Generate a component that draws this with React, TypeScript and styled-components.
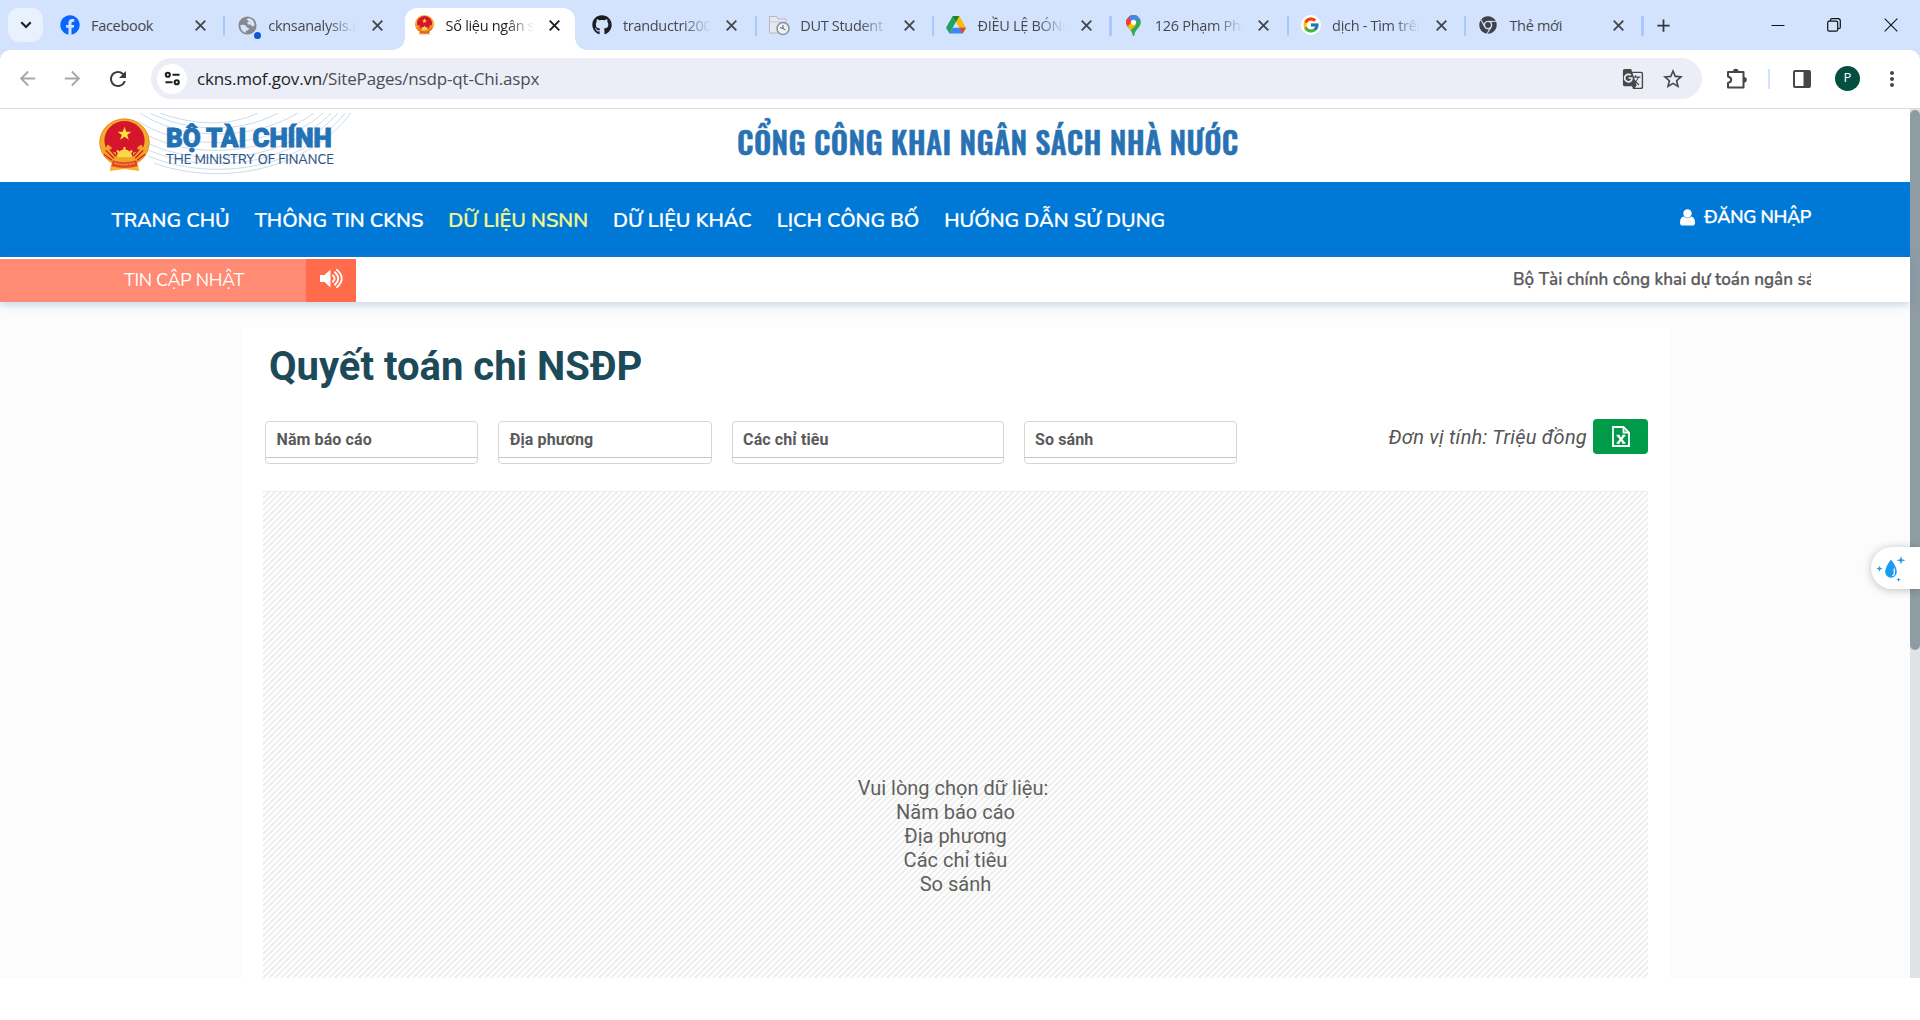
import React from "react";
import styled, { createGlobalStyle, css } from "styled-components";
import { FaFacebook, FaGithub, FaChrome } from "react-icons/fa";
import { FcGoogle } from "react-icons/fc";
import {
  MdGTranslate,
  MdStarBorder,
  MdAdd,
  MdArrowBack,
  MdArrowForward,
  MdRefresh,
  MdMoreVert,
} from "react-icons/md";

const UI_FONT = `"Open Sans", "Noto Sans", sans-serif`;
const SITE_FONT = `Nunito, Lato, "Noto Sans", sans-serif`;
const BODY_FONT = `Roboto, "Noto Sans", sans-serif`;
const TITLE_FONT = `Oswald, "Roboto Condensed", Roboto, sans-serif`;

const GlobalStyle = createGlobalStyle`
  *, *::before, *::after { box-sizing: border-box; }
  body { margin: 0; background: #fff; overflow: hidden; }
  svg { display: block; flex: none; }
`;

const Screen = styled.div`
  position: relative;
  width: 1920px;
  height: 1020px;
  overflow: hidden;
  display: flex;
  flex-direction: column;
  background: #fff;
`;

/* ---------- browser chrome ---------- */

const TabStrip = styled.div`
  height: 50px;
  flex: none;
  display: flex;
  padding-left: 8px;
  background: #d3e2fd;
`;

const TabSearch = styled.div`
  width: 35px;
  height: 34px;
  margin: 8px 4px 0 0;
  border-radius: 11px;
  background: #e9f0fe;
  display: flex;
  align-items: center;
  justify-content: center;
  color: #1f1f1f;
`;

const TabBox = styled.div<{ $active?: boolean; $line?: boolean }>`
  position: relative;
  isolation: isolate;
  width: 177.3px;
  height: 50px;
  padding-left: 13px;
  display: flex;
  align-items: center;
  color: ${(p) => (p.$active ? "#1f1f1f" : "#45494d")};
  ${(p) =>
    p.$line &&
    css`
      &::after {
        content: "";
        position: absolute;
        right: -1px;
        top: 16px;
        width: 2.5px;
        height: 20px;
        background: #a9c8fb;
      }
    `}
`;

const ActiveShape = styled.div`
  position: absolute;
  z-index: -1;
  left: 3px;
  right: 4px;
  top: 8px;
  bottom: 0;
  border-radius: 12px 12px 0 0;
  background: #fff;
  &::before,
  &::after {
    content: "";
    position: absolute;
    bottom: 0;
    width: 12px;
    height: 12px;
  }
  &::before {
    left: -12px;
    background: radial-gradient(circle at 0 0, transparent 11.5px, #fff 12px);
  }
  &::after {
    right: -12px;
    background: radial-gradient(circle at 100% 0, transparent 11.5px, #fff 12px);
  }
`;

const TabIcon = styled.div`
  position: relative;
  width: 20px;
  height: 20px;
  margin-right: 11px;
  display: flex;
  align-items: center;
  justify-content: center;
`;

const NoticeDot = styled.i`
  position: absolute;
  right: -4px;
  bottom: -4px;
  width: 7px;
  height: 7px;
  border-radius: 50%;
  background: #0b57d0;
`;

const TabTitle = styled.div<{ $fade?: boolean }>`
  position: relative;
  width: 88px;
  margin: 1px 15.5px 0 0;
  overflow: hidden;
  white-space: nowrap;
  font: 14.5px/24px ${UI_FONT};
  letter-spacing: -0.3px;
  ${(p) =>
    p.$fade &&
    css`
      mask-image: linear-gradient(90deg, #000 68%, transparent 100%);
    `}
`;

const StripAfterTabs = styled.div`
  flex: 1;
  display: flex;
  align-items: center;
  color: #33373b;
  padding-left: 10px;
`;

const WindowControls = styled.div`
  margin-left: auto;
  display: grid;
  grid-template-columns: 56px 56px 58px;
  justify-items: center;
  align-items: center;
`;

const Toolbar = styled.div`
  height: 59px;
  flex: none;
  display: flex;
  align-items: center;
  padding: 0 16px 1px 16px;
  border-bottom: 1px solid #d9dcdf;
  background: #fff;
  position: relative;
  color: #474747;
  &::before,
  &::after {
    content: "";
    position: absolute;
    top: 0;
    width: 10px;
    height: 10px;
  }
  &::before {
    left: 0;
    background: radial-gradient(circle at 100% 100%, transparent 9.5px, #d3e2fd 10px);
  }
  &::after {
    right: 0;
    background: radial-gradient(circle at 0 100%, transparent 9.5px, #d3e2fd 10px);
  }
`;

const NavButton = styled.div<{ $dim?: boolean }>`
  width: 24px;
  margin-right: 21px;
  color: ${(p) => (p.$dim ? "#a6a8ab" : "#3c3c3c")};
`;

const AddressBar = styled.div`
  width: 1551px;
  height: 41px;
  border-radius: 21px;
  background: #ebedf7;
  display: flex;
  align-items: center;
  padding: 0 17px 0 6px;
`;

const SiteInfo = styled.div`
  width: 30px;
  height: 30px;
  border-radius: 50%;
  background: #fff;
  display: flex;
  align-items: center;
  justify-content: center;
`;

const Url = styled.div`
  flex: 1;
  margin: 1px 0 0 10px;
  font: 17px/24px ${UI_FONT};
  letter-spacing: -0.17px;
  color: #4a4d51;
  b {
    font-weight: 400;
    color: #1f1f1f;
  }
`;

const AddressActions = styled.div`
  display: flex;
  align-items: center;
  gap: 17px;
`;

const ToolbarActions = styled.div`
  flex: 1;
  display: flex;
  align-items: center;
  padding-left: 24px;
`;

const ToolbarDivider = styled.div`
  width: 2px;
  height: 20px;
  margin: 0 23px 0 20px;
  background: #d3e2fd;
`;

const Avatar = styled.div`
  width: 25px;
  height: 25px;
  margin: 0 20px 0 24px;
  border-radius: 50%;
  background: #044f42;
  color: #fff;
  font: 13px/23px ${UI_FONT};
  text-align: center;
`;

/* ---------- web page ---------- */

const PageArea = styled.div`
  height: 869px;
  flex: none;
  display: flex;
  overflow: hidden;
`;

const Page = styled.div`
  width: 1910px;
  display: flex;
  flex-direction: column;
  background: #fcfcfc;
`;

const ScrollTrack = styled.div`
  width: 10px;
  background: #dfe3e6;
`;

const ScrollThumb = styled.div`
  height: 540px;
  margin-top: 1px;
  border-radius: 5px;
  background: #8f9ca4;
`;

const Masthead = styled.header`
  height: 73px;
  flex: none;
  background: #fff;
  display: flex;
  align-items: flex-start;
`;

const Brand = styled.div`
  position: relative;
  width: 255px;
  height: 62px;
  margin: 4px 0 0 98px;
  display: flex;
`;

const Waves = styled.svg`
  position: absolute;
  left: 0;
  top: 0;
`;

const Emblem = styled.svg`
  position: relative;
`;

const BrandEmblem = styled.div`
  margin: 5px 0 0 1px;
`;

const BrandText = styled.div`
  position: relative;
  margin: 7px 0 0 16px;
  white-space: nowrap;
`;

const BrandName = styled.div`
  font: 900 26px/36px ${BODY_FONT};
  letter-spacing: -0.13px;
  color: #2272b5;
  -webkit-text-stroke: 0.9px #2272b5;
`;

const BrandSub = styled.div`
  margin-top: -5px;
  font: 400 13px/18px ${SITE_FONT};
  letter-spacing: 0.02px;
  color: #2b5588;
  -webkit-text-stroke: 0.2px #2b5588;
`;

const SiteTitle = styled.h1`
  margin: 7px 0 0 384px;
  font: 600 30px/51px ${TITLE_FONT};
  letter-spacing: 0.35px;
  color: #2872b4;
  -webkit-text-stroke: 0.4px #2872b4;
  white-space: nowrap;
`;

const MainNav = styled.nav`
  height: 75px;
  flex: none;
  padding: 2px 99px 0 111.5px;
  display: flex;
  align-items: center;
  gap: 25px;
  background: #0078d6;
`;

const NavLink = styled.a<{ $active?: boolean }>`
  font: 600 20px/28px ${SITE_FONT};
  letter-spacing: -0.04px;
  color: ${(p) => (p.$active ? "#f4f98c" : "#fff")};
  -webkit-text-stroke: 0.2px currentColor;
  white-space: nowrap;
`;

const Login = styled.a`
  margin: -7px 0 0 auto;
  display: flex;
  align-items: center;
  gap: 9px;
  font: 600 18px/26px ${SITE_FONT};
  letter-spacing: -0.35px;
  -webkit-text-stroke: 0.25px currentColor;
  color: #fff;
`;

const Ticker = styled.div`
  position: relative;
  height: 45px;
  flex: none;
  padding-top: 2px;
  display: flex;
  background: #fff;
  box-shadow: 0 2px 9px rgba(80, 130, 170, 0.35);
`;

const TickerLabel = styled.div`
  width: 306px;
  padding-left: 62px;
  background: #ff8b74;
  color: #fff;
  font: 400 18px/42px ${SITE_FONT};
  letter-spacing: -0.33px;
  text-align: center;
`;

const TickerIcon = styled.div`
  width: 50px;
  background: #ff6b4b;
  display: flex;
  align-items: center;
  justify-content: center;
  padding-bottom: 4px;
`;

const TickerNews = styled.div`
  width: 298px;
  margin-left: 1157px;
  overflow: hidden;
  white-space: nowrap;
  font: 600 17px/42px ${SITE_FONT};
  -webkit-text-stroke: 0.25px currentColor;
  color: #5c5c5c;
`;

const Panel = styled.main`
  width: 1426px;
  flex: 1;
  min-height: 0;
  margin: 25px 0 0 243px;
  padding: 0 21px 0 20px;
  display: flex;
  flex-direction: column;
  background: #fff;
`;

const Heading = styled.h2`
  margin: 14px 0 0 6px;
  font: 700 40px/52px ${BODY_FONT};
  color: #1d4a59;
`;

const FilterRow = styled.div`
  display: flex;
  align-items: flex-start;
  margin-top: 26px;
  padding-left: 2px;
  gap: 20px;
`;

const FilterBox = styled.div<{ $wide?: boolean }>`
  width: ${(p) => (p.$wide ? 272 : 213.3)}px;
  height: 43px;
  margin-top: 2px;
  border: 1px solid #d6d6d6;
  border-radius: 4px;
`;

const FilterLabel = styled.div`
  height: 36px;
  padding-left: 10.5px;
  border-bottom: 1px solid #c6c6c6;
  font: 700 16px/35px ${BODY_FONT};
  letter-spacing: 0.1px;
  color: #5a5a5a;
`;

const UnitBlock = styled.div`
  margin-left: auto;
  display: flex;
  gap: 6px;
  font: italic 20px/36px ${BODY_FONT};
  letter-spacing: 0.24px;
  color: #555;
`;

const ExcelButton = styled.div`
  width: 55px;
  height: 35px;
  border-radius: 4px;
  background: #009b49;
  display: flex;
  align-items: center;
  justify-content: center;
`;

const Hatched = styled.section`
  flex: 1;
  min-height: 0;
  margin-top: 27px;
  padding: 284px 0 0;
  border-top: 1px solid #ededed;
  background: linear-gradient(135deg, #fff 25%, #f0f0f0 25% 50%, #fff 50% 75%, #f0f0f0 75%) 0 2px / 6px 6px;
  font: 20px/24px ${BODY_FONT};
  color: #606060;
  text-align: center;
`;

const HintLine = styled.div<{ $lead?: boolean }>`
  padding-right: ${(p) => (p.$lead ? 5 : 0)}px;
`;

const Assistant = styled.div`
  position: absolute;
  right: 0;
  top: 547px;
  width: 49px;
  height: 42px;
  padding: 1px 0 0 5px;
  border-radius: 21px 0 0 21px;
  background: #fff;
  box-shadow: 0 1px 8px rgba(0, 0, 0, 0.25);
  display: flex;
  align-items: center;
`;

const GoogleBadge = styled.div`
  width: 20px;
  height: 20px;
  border-radius: 50%;
  background: #fff;
  display: flex;
  align-items: center;
  justify-content: center;
`;

/* ---------- drawings ---------- */

const EmblemDrawing = ({ size = 51 }: { size?: number }) => (
  <Emblem width={size} height={size * 1.04} viewBox="0 0 52 54">
    <ellipse cx="26" cy="25" rx="25.5" ry="24.500" fill="#f4ae2a" />
    <ellipse cx="26" cy="25" rx="25" ry="24" fill="none" stroke="#e98b25" />
    <ellipse cx="26" cy="23" rx="20.500" ry="20" fill="#d5152b" />
    <path d="M26 9l1.8 5h5.2l-4.200 3.200 1.600 5L26 19.200l-4.400 3 1.600-5L19 14h5.200z" fill="#fbe23c" />
    <path d="M1 29l6 1 2-3 4 3-1 4 5 1 1 5 8-6 8 6 1-5 5-1-1-4 4-3 2 3 6-1q-3 13-14 17H15Q4 42 1 29z" fill="#f3a526" />
    <path d="M18 40a8 8 0 0116 0z" fill="#fbd84a" />
    <path d="M18.500 33l2 3M26 29.500V34M33.500 33l-2 3" stroke="#fbd84a" strokeWidth="2" />
    <path d="M7 33l8 8M45 33l-8 8M11 32l6 7M41 32l-6 7M5 37l8 6M47 37l-8 6" stroke="#d5152b" strokeWidth="1.300" fill="none" />
    <path d="M14 43q12 4 24 0l2 7q-14 4-28 0z" fill="#e2482a" />
    <path d="M16 46q10 3 20 0" stroke="#f6b42c" strokeWidth="1.200" strokeDasharray="2 1" fill="none" />
    <path d="M12 49l-1 5 15-2 15 2-1-5q-14 4-28 0z" fill="#f6b42c" />
  </Emblem>
);

const WaveDrawing = () => (
  <Waves width="255" height="62" viewBox="0 0 255 62" fill="none" stroke="#bcd3e8" strokeWidth="0.800">
    <path d="M42 0C80 26 150 30 200 0" />
    <path d="M52 0C88 18 140 22 180 0" />
    <path d="M40 8C85 38 165 38 216 0" />
    <path d="M42 18C90 48 175 44 225 0" />
    <path d="M45 28C100 56 185 50 233 0" />
    <path d="M48 36C105 62 190 56 240 0" />
    <path d="M50 43C110 68 200 60 247 0" />
    <path d="M56 50C115 72 205 62 253 0" />
    <path d="M62 0C95 12 130 14 160 0" />
  </Waves>
);

const ChevronIcon = () => (
  <svg width="12" height="8" viewBox="0 0 12 8" fill="none" stroke="currentColor" strokeWidth="2.200">
    <path d="M1.300 1.300L6 6l4.700-4.700" />
  </svg>
);

const CloseIcon = () => (
  <svg width="11" height="11" viewBox="0 0 11 11" stroke="currentColor" strokeWidth="1.900">
    <path d="M0.700 0.700l9.600 9.600M10.300 0.700l-9.600 9.600" />
  </svg>
);

const GlobeIcon = () => (
  <svg width="19" height="19" viewBox="0 0 20 20">
    <circle cx="10" cy="10" r="9.500" fill="#85888c" />
    <path d="M2.500 9.500q4-1 6 1 .5 2 3 2l-.5 2.500-2.500.5-.5 2.500q-5.500-2-5.500-8.500z" fill="#d3e2fd" />
    <path d="M9 3.500q1.500-1.500 4-1 4.500 2.500 4.500 7.500l-2.500 1-2-2H10.500L9.500 7l2-1z" fill="#d3e2fd" />
  </svg>
);

const FolderClockIcon = () => (
  <svg width="22" height="21" viewBox="0 0 22 21">
    <path d="M1.500 18V1.500h7l1.500 2.500h8V18z" fill="#e6e9ee" stroke="#b4bac4" />
    <path d="M2 7h15" stroke="#c3c8d0" />
    <circle cx="15" cy="13.500" r="6" fill="#eef1f5" stroke="#8a94a3" strokeWidth="1.600" />
    <path d="M15 10v3.500l2.500 1.500M12 12.500l3 1" stroke="#555d6b" fill="none" />
  </svg>
);

const DriveIcon = () => (
  <svg width="20" height="18" viewBox="0 0 20 18">
    <path d="M6.700 0h6.600L10 5.700 3.400 17.500 0 11.700z" fill="#1ea362" />
    <path d="M6.700 0h6.600L20 11.700h-6.600z" fill="#fbbc04" />
    <path d="M6.700 11.700H20l-3.400 5.800H3.400z" fill="#4285f4" />
    <path d="M13.400 11.700H20l-3.400 5.800z" fill="#ea4335" />
    <path d="M6.700 0L10 5.700l3.300-5.700z" fill="#188038" />
  </svg>
);

const MapsPinIcon = () => (
  <svg width="15" height="21" viewBox="0 0 15 21">
    <defs>
      <clipPath id="pin">
        <path d="M7.500 0a7.300 7.300 0 017.300 7.300c0 5-5.300 6.700-6.600 13.200q-.7 1-1.400 0C5.500 14 .2 12.300.2 7.300A7.300 7.300 0 017.500 0z" />
      </clipPath>
    </defs>
    <g clipPath="url(#pin)">
      <path d="M0 0h15v21H0z" fill="#34a853" />
      <path d="M0 15L13 0H0z" fill="#ea4335" />
      <path d="M3 0h12v5L9 5 7.500 7.300 3 3z" fill="#4285f4" />
      <path d="M0 11l6-5 4 4-7 7H0z" fill="#fbbc04" />
      <path d="M0 2l6 5-5 5H0z" fill="#ea4335" />
    </g>
    <circle cx="7.500" cy="7.300" r="2.600" fill="#fff" />
  </svg>
);

const TuneIcon = () => (
  <svg width="17" height="15" viewBox="0 0 18 16" fill="none" stroke="#1f1f1f" strokeWidth="2.200">
    <circle cx="4" cy="4" r="2.200" />
    <path d="M9 4h7.500M1.500 12H9" />
    <circle cx="13.500" cy="12" r="2.200" />
  </svg>
);

const ExtensionIcon = () => (
  <svg width="22" height="22" viewBox="0 0 22 22" fill="none" stroke="#474747" strokeWidth="2" strokeLinejoin="round">
    <path d="M2 4h15.500v15.500H2V15q3.200-.8 3.200-3.200T2 8.500z" />
    <path d="M7 3.500a2.800 2.800 0 015.600 0zM18 9a2.800 2.800 0 010 5.600z" fill="#474747" stroke="none" />
  </svg>
);

const SidePanelIcon = () => (
  <svg width="18" height="18" viewBox="0 0 18 18">
    <rect x="1" y="1" width="16" height="16" rx="1" fill="none" stroke="#474747" strokeWidth="2" />
    <path d="M10.500 1H17v16h-6.500z" fill="#474747" />
  </svg>
);

const MinimizeIcon = () => (
  <svg width="14" height="14" viewBox="0 0 14 14">
    <path d="M0.500 7.500h13" stroke="#111" />
  </svg>
);

const RestoreIcon = () => (
  <svg width="14" height="14" viewBox="0 0 14 14" fill="none" stroke="#111" strokeWidth="1.200">
    <rect x="0.700" y="3.200" width="10" height="10" rx="1.500" />
    <path d="M3.500 3V2q0-1.300 1.300-1.300H11q2.300 0 2.300 2.300v6.200q0 1.300-1.300 1.300h-1" />
  </svg>
);

const WindowCloseIcon = () => (
  <svg width="14" height="14" viewBox="0 0 14 14">
    <path d="M0.700 0.700l12.600 12.600M13.300 0.700L0.700 13.300" stroke="#111" strokeWidth="1.100" />
  </svg>
);

const UserIcon = () => (
  <svg width="15" height="17" viewBox="0 0 15 17" fill="#fff">
    <circle cx="7.500" cy="4.500" r="4.200" />
    <path d="M3.500 7.500q4 3.500 8 0 3.500.8 3.500 6.200 0 2.800-2.500 2.800h-10Q0 16.500 0 13.700 0 8.300 3.500 7.500z" />
  </svg>
);

const SpeakerIcon = () => (
  <svg width="23" height="19" viewBox="0 0 23 19" fill="none" stroke="#fff" strokeWidth="1.900" strokeLinecap="round">
    <path d="M0 6h4.500L10.500 0.500v18L4.500 13H0z" fill="#fff" stroke="none" />
    <path d="M13 6.500q3 3 0 6M15 3.300q6.500 6.200 0 12.400M17 0.900q9.500 8.600 0 17.200" />
  </svg>
);

const ExcelFileIcon = () => (
  <svg width="18" height="21" viewBox="0 0 18 21" fill="none" stroke="#fff" strokeWidth="1.800">
    <path d="M1 1h10.500L17 6.500V20H1z" />
    <path d="M11.500 1v5.500H17" />
    <path d="M6 9.500l6 7.500M12 9.500l-6 7.500" strokeWidth="2.200" />
    <path d="M4.600 9.500h3M10.400 9.500h3M4.600 17h3M10.400 17h3" strokeWidth="1.300" />
  </svg>
);

const DropIcon = () => (
  <svg width="32" height="28" viewBox="0 0 32 28" fill="#1d9bf0">
    <path d="M15 4.500q5.800 7.500 5.800 12.200a5.800 6 0 01-11.600 0Q9.200 12 15 4.500z" />
    <path d="M18.300 14v4.500q0 1.500-1.500 2" stroke="#fff" strokeWidth="1.300" fill="none" strokeLinecap="round" />
    <path d="M25 1l1 3.200 3.500 1-3.500 1L25 9.500l-1-3.300-3.500-1 3.500-1z" />
    <path d="M3.500 10.500l.8 2.300 2.400.8-2.400.8-.8 2.300-.8-2.300-2.400-.8 2.400-.8z" />
    <path d="M22.500 22.500l.6 1.600 1.700.6-1.700.6-.6 1.600-.6-1.600-1.700-.6 1.700-.6z" />
  </svg>
);

/* ---------- data ---------- */

type TabData = { title: string; icon: React.ReactNode; fade?: boolean; active?: boolean; line?: boolean; dot?: boolean };

const tabs: TabData[] = [
  { title: "Facebook", icon: <FaFacebook size={20} color="#0866ff" />, line: true },
  { title: "cknsanalysis.n", icon: <GlobeIcon />, fade: true, dot: true },
  { title: "Số liệu ngân s", icon: <EmblemDrawing size={19} />, fade: true, active: true },
  { title: "tranductri200", icon: <FaGithub size={20} color="#1b1f24" />, fade: true, line: true },
  { title: "DUT Student", icon: <FolderClockIcon />, fade: true, line: true },
  { title: "ĐIỀU LỆ BÓNG", icon: <DriveIcon />, fade: true, line: true },
  { title: "126 Phạm Phú", icon: <MapsPinIcon />, fade: true, line: true },
  {
    title: "dịch - Tìm trên",
    icon: (
      <GoogleBadge>
        <FcGoogle size={18} />
      </GoogleBadge>
    ),
    fade: true,
    line: true,
  },
  { title: "Thẻ mới", icon: <FaChrome size={18} color="#3f4347" />, line: true },
];

const navItems = ["TRANG CHỦ", "THÔNG TIN CKNS", "DỮ LIỆU NSNN", "DỮ LIỆU KHÁC", "LỊCH CÔNG BỐ", "HƯỚNG DẪN SỬ DỤNG"];
const filters = ["Năm báo cáo", "Địa phương", "Các chỉ tiêu", "So sánh"];

export default function App() {
  return (
    <Screen>
      <GlobalStyle />
      <TabStrip>
        <TabSearch>
          <ChevronIcon />
        </TabSearch>
        {tabs.map((t) => (
          <TabBox key={t.title} $active={t.active} $line={t.line}>
            {t.active && <ActiveShape />}
            <TabIcon>
              {t.icon}
              {t.dot && <NoticeDot />}
            </TabIcon>
            <TabTitle $fade={t.fade}>{t.title}</TabTitle>
            <CloseIcon />
          </TabBox>
        ))}
        <StripAfterTabs>
          <MdAdd size={21} />
          <WindowControls>
            <MinimizeIcon />
            <RestoreIcon />
            <WindowCloseIcon />
          </WindowControls>
        </StripAfterTabs>
      </TabStrip>

      <Toolbar>
        <NavButton $dim>
          <MdArrowBack size={23} />
        </NavButton>
        <NavButton $dim>
          <MdArrowForward size={23} />
        </NavButton>
        <NavButton>
          <MdRefresh size={24} />
        </NavButton>
        <AddressBar>
          <SiteInfo>
            <TuneIcon />
          </SiteInfo>
          <Url>
            <b>ckns.mof.gov.vn</b>/SitePages/nsdp-qt-Chi.aspx
          </Url>
          <AddressActions>
            <MdGTranslate size={22} />
            <MdStarBorder size={24} />
          </AddressActions>
        </AddressBar>
        <ToolbarActions>
          <ExtensionIcon />
          <ToolbarDivider />
          <SidePanelIcon />
          <Avatar>P</Avatar>
          <MdMoreVert size={24} />
        </ToolbarActions>
      </Toolbar>

      <PageArea>
        <Page>
          <Masthead>
            <Brand>
              <WaveDrawing />
              <BrandEmblem>
                <EmblemDrawing />
              </BrandEmblem>
              <BrandText>
                <BrandName>BỘ TÀI CHÍNH</BrandName>
                <BrandSub>THE MINISTRY OF FINANCE</BrandSub>
              </BrandText>
            </Brand>
            <SiteTitle>CỔNG CÔNG KHAI NGÂN SÁCH NHÀ NƯỚC</SiteTitle>
          </Masthead>
          <MainNav>
            {navItems.map((n) => (
              <NavLink key={n} $active={n === "DỮ LIỆU NSNN"}>
                {n}
              </NavLink>
            ))}
            <Login>
              <UserIcon />
              ĐĂNG NHẬP
            </Login>
          </MainNav>
          <Ticker>
            <TickerLabel>TIN CẬP NHẬT</TickerLabel>
            <TickerIcon>
              <SpeakerIcon />
            </TickerIcon>
            <TickerNews>Bộ Tài chính công khai dự toán ngân sách</TickerNews>
          </Ticker>
          <Panel>
            <Heading>Quyết toán chi NSĐP</Heading>
            <FilterRow>
              {filters.map((f) => (
                <FilterBox key={f} $wide={f === "Các chỉ tiêu"}>
                  <FilterLabel>{f}</FilterLabel>
                </FilterBox>
              ))}
              <UnitBlock>
                Đơn vị tính: Triệu đồng
                <ExcelButton>
                  <ExcelFileIcon />
                </ExcelButton>
              </UnitBlock>
            </FilterRow>
            <Hatched>
              <HintLine $lead>Vui lòng chọn dữ liệu:</HintLine>
              {filters.map((f) => (
                <HintLine key={f}>{f}</HintLine>
              ))}
            </Hatched>
          </Panel>
        </Page>
        <ScrollTrack>
          <ScrollThumb />
        </ScrollTrack>
      </PageArea>
      <Assistant>
        <DropIcon />
      </Assistant>
    </Screen>
  );
}
